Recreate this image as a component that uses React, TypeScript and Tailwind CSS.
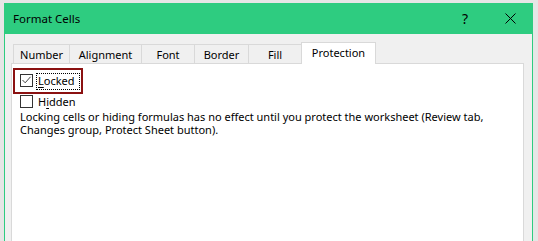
import React from "react";

const font = { fontFamily: '"Noto Sans", "Open Sans", sans-serif' };

function Tab({ label, w }: { label: string; w: string }) {
  return (
    <div
      className={`${w} h-[19px] border-l border-t border-[#d9d9d9] bg-[#f0f0f0] flex items-center justify-center text-[11px] leading-[13px] text-black`}
    >
      {label}
    </div>
  );
}

export default function App() {
  return (
    <div
      className="w-[538px] h-[241px] bg-[#e6e6e6] overflow-hidden pt-[3px] pl-[4px] pr-[5px]"
      style={font}
    >
      <div className="h-[260px] flex flex-col border-x border-[#2ecc80] bg-[#f0f0f0]">
        {/* Title bar */}
        <div className="h-[31px] bg-[#2ecc80] flex items-center pl-[8px] pr-[12px]">
          <span className="text-[11.5px] leading-[14px] text-black">Format Cells</span>
          <div className="flex-1" />
          <span className="w-[20px] text-center text-[14px] leading-[14px] text-black">?</span>
          <div className="w-[25px]" />
          <div className="w-[20px] flex justify-center">
            <svg width="11" height="11" viewBox="0 0 11 11">
              <path d="M0.5 0.5 L10.5 10.5 M10.5 0.5 L0.5 10.5" stroke="#000" strokeWidth="1" fill="none" />
            </svg>
          </div>
        </div>

        {/* Body */}
        <div className="flex-1 flex flex-col pt-[8px] pl-[6px] pr-[8px]">
          <div className="flex items-end pl-[2px]">
            <Tab label="Number" w="w-[56px]" />
            <Tab label="Alignment" w="w-[72px]" />
            <Tab label="Font" w="w-[53px]" />
            <Tab label="Border" w="w-[54px]" />
            <Tab label="Fill" w="w-[53px]" />
            <div className="w-[75px] h-[22px] -mb-px relative z-10 bg-white border-x border-t border-[#d9d9d9] flex items-start justify-center pt-[3px] text-[11px] leading-[13px] text-black">
              Protection
            </div>
          </div>

          <div className="flex-1 bg-white border-l border-t border-r border-[#d9d9d9] relative pl-[8px] pt-[9px] text-[11px] text-black">
            {/* annotation box */}
            <div className="absolute left-[1px] top-[4px] w-[70px] h-[26px] border-2 border-[#8b1111]" />

            <div className="flex items-start h-[17px]">
              <div className="mt-[1px] w-[13px] h-[13px] border border-[#333] bg-white">
                <svg width="11" height="11" viewBox="0 0 11 11">
                  <path d="M1.5 5 L4.2 7.8 L9.5 1.8" stroke="#444" strokeWidth="1" fill="none" />
                </svg>
              </div>
              <span className="ml-[3px] w-[44px] h-[17px] border border-dotted border-black pl-[1px] leading-[13px]">
                <span className="underline underline-offset-2">L</span>ocked
              </span>
            </div>

            <div className="flex items-start mt-[5px] h-[13px]">
              <div className="w-[13px] h-[13px] border border-[#333] bg-white" />
              <span className="ml-[5px] leading-[13px]">
                H<span className="underline underline-offset-2">i</span>dden
              </span>
            </div>

            <p className="mt-[2px] leading-[13px] whitespace-nowrap">
              Locking cells or hiding formulas has no effect until you protect the worksheet (Review tab,
              <br />
              Changes group, Protect Sheet button).
            </p>
          </div>
        </div>
      </div>
    </div>
  );
}
